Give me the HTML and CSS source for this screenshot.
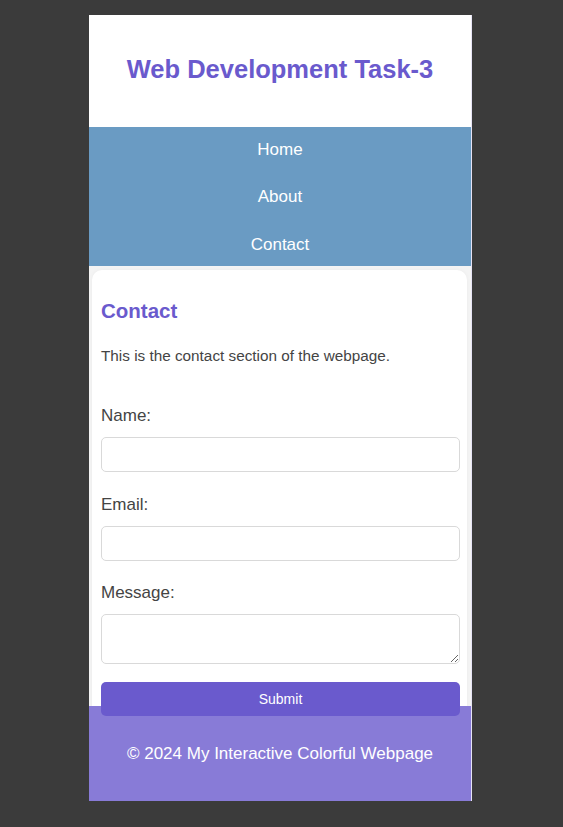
FILE: index.html
```html
<!DOCTYPE html>
<html lang="en">
<head>
<meta charset="utf-8">
<title>Web Development Task-3</title>
<link rel="stylesheet" href="styles.css">
</head>
<body>
<div class="page">
  <header class="site-header">
    <h1 class="site-title">Web Development Task-3</h1>
  </header>
  <nav class="site-nav">
    <a class="nav-link" href="#home">Home</a>
    <a class="nav-link" href="#about">About</a>
    <a class="nav-link" href="#contact">Contact</a>
  </nav>
  <main class="main">
    <section class="card" id="contact">
      <h2 class="card-title">Contact</h2>
      <p class="card-text">This is the contact section of the webpage.</p>
      <form class="form">
        <label class="label label-first" for="name">Name:</label>
        <input class="field field-first" id="name" type="text">
        <label class="label" for="email">Email:</label>
        <input class="field" id="email" type="email">
        <label class="label" for="message">Message:</label>
        <textarea class="field field-area" id="message"></textarea>
        <button class="submit" type="button">Submit</button>
      </form>
    </section>
  </main>
  <footer class="site-footer">
    <p class="footer-text">© 2024 My Interactive Colorful Webpage</p>
  </footer>
</div>
</body>
</html>
```
FILE: styles.css
```css
html, body {
  margin: 0;
  padding: 0;
}
body {
  background: #3b3b3b;
  font-family: "Liberation Sans", Arial, sans-serif;
  padding: 15px 0 0 89px;
}
.page {
  width: 383px;
  background: #f4f4f4;
  border-right: 1px solid #e6e3f5;
  box-sizing: border-box;
}
.site-header {
  background: #fff;
  height: 112px;
  box-sizing: border-box;
  padding-bottom: 3px;
  display: flex;
  align-items: center;
  justify-content: center;
}
.site-title {
  margin: 0;
  color: #6a5acd;
  font-size: 25.5px;
  font-weight: bold;
}
.site-nav {
  background: #6a9bc3;
  display: flex;
  flex-direction: column;
  height: 139px;
  overflow: hidden;
  padding-top: 0;
}
.nav-link {
  flex: 0 0 47.5px;
  display: flex;
  align-items: center;
  justify-content: center;
  color: #fff;
  text-decoration: none;
  font-size: 17px;
}
.nav-link:first-child {
  margin-top: -1px;
}
.main {
  height: 440px;
  padding: 4px 4px 0 3px;
  box-sizing: border-box;
}
.card {
  background: #fff;
  border-radius: 10px;
  padding: 27px 7px 20px 9px;
  box-shadow: 0 0 4px rgba(0, 0, 0, 0.04);
}
.card-title {
  margin: 0;
  color: #6a5acd;
  font-size: 20.5px;
  line-height: 28px;
}
.card-text {
  margin: 21px 0 0;
  color: #444;
  font-size: 15.3px;
  line-height: 20px;
}
.form {
  display: flex;
  flex-direction: column;
}
.label {
  color: #444;
  font-size: 17px;
  line-height: 20px;
  margin: 22px 0 11px;
}
.label-first {
  margin-top: 40px;
}
.field {
  display: block;
  width: 100%;
  box-sizing: border-box;
  height: 35px;
  border: 1px solid #d9d9d9;
  border-radius: 5px;
  margin: 0;
  font-family: inherit;
  background: #fff;
}
.field-first {
  margin-bottom: 1px;
}
.field-area {
  height: 50px;
}
.submit {
  position: relative;
  z-index: 1;
  margin-top: 18px;
  height: 34px;
  border: none;
  border-radius: 5px;
  background: #6a5acd;
  color: #fff;
  font-family: inherit;
  font-size: 14px;
}
.site-footer {
  background: #887bd7;
  height: 95px;
  display: flex;
  align-items: center;
  justify-content: center;
}
.footer-text {
  margin: 0;
  color: #fff;
  font-size: 17px;
}
```
